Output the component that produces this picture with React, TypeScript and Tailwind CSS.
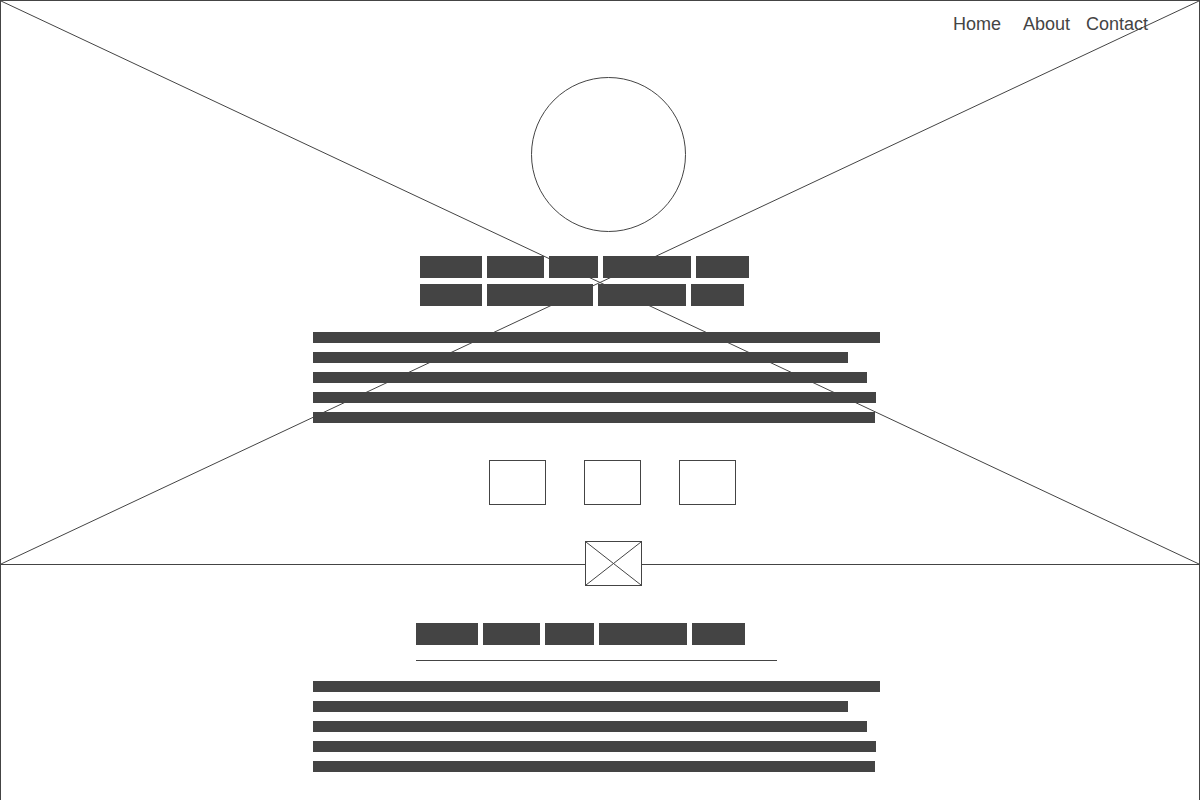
import React from "react";

const ink = "bg-[#444444]";

const Blocks = ({ widths }: { widths: number[] }) => (
  <div className="flex gap-[5px]">
    {widths.map((w, i) => (
      <div key={i} className={`h-[22px] ${ink}`} style={{ width: w }} />
    ))}
  </div>
);

const Paragraph = () => {
  const widths = [567, 535, 554, 563, 562];
  return (
    <div className="ml-[312px] flex flex-col gap-[9px]">
      {widths.map((w, i) => (
        <div key={i} className={`h-[11px] ${ink}`} style={{ width: w }} />
      ))}
    </div>
  );
};

const Cross = () => (
  <svg
    className="absolute inset-0 w-full h-full"
    viewBox="0 0 100 100"
    preserveAspectRatio="none"
  >
    <line x1="0" y1="0" x2="100" y2="100" stroke="#444" strokeWidth="1" vectorEffect="non-scaling-stroke" />
    <line x1="100" y1="0" x2="0" y2="100" stroke="#444" strokeWidth="1" vectorEffect="non-scaling-stroke" />
  </svg>
);

const App = () => {
  return (
    <div
      className="w-[1200px] h-[800px] overflow-hidden bg-white border-l border-t border-r border-[#444444] text-[#444444]"
      style={{ fontFamily: '"Liberation Sans", Arial, sans-serif' }}
    >
      {/* hero image placeholder */}
      <div className="relative h-[564px] border-b border-[#444444]">
        <Cross />

        <div className="relative flex flex-col">
          <nav className="h-[76px] flex justify-end items-start pt-[13px] pr-[51px] text-[18px] leading-[20px]">
            <a>Home</a>
            <a className="ml-[22px]">About</a>
            <a className="ml-[16px]">Contact</a>
          </nav>

          <div className="ml-[530px] w-[155px] h-[155px] rounded-full border border-[#444444]" />

          <div className="ml-[419px] mt-[24px] flex flex-col gap-[6px]">
            <Blocks widths={[62, 57, 49, 88, 53]} />
            <Blocks widths={[62, 106, 88, 53]} />
          </div>

          <div className="mt-[26px]">
            <Paragraph />
          </div>

          <div className="ml-[488px] mt-[37px] flex gap-[38px]">
            {[0, 1, 2].map((i) => (
              <div key={i} className="w-[57px] h-[45px] border border-[#444444]" />
            ))}
          </div>
        </div>

        <div className="absolute left-[584px] top-[540px] w-[57px] h-[45px] bg-white border border-[#444444]">
          <Cross />
        </div>
      </div>

      {/* content section */}
      <div className="flex flex-col">
        <div className="ml-[415px] mt-[58px]">
          <Blocks widths={[62, 57, 49, 88, 53]} />
        </div>
        <div className="ml-[415px] mt-[15px] w-[361px] h-px bg-[#444444]" />
        <div className="mt-[20px]">
          <Paragraph />
        </div>
      </div>
    </div>
  );
};

export default App;
